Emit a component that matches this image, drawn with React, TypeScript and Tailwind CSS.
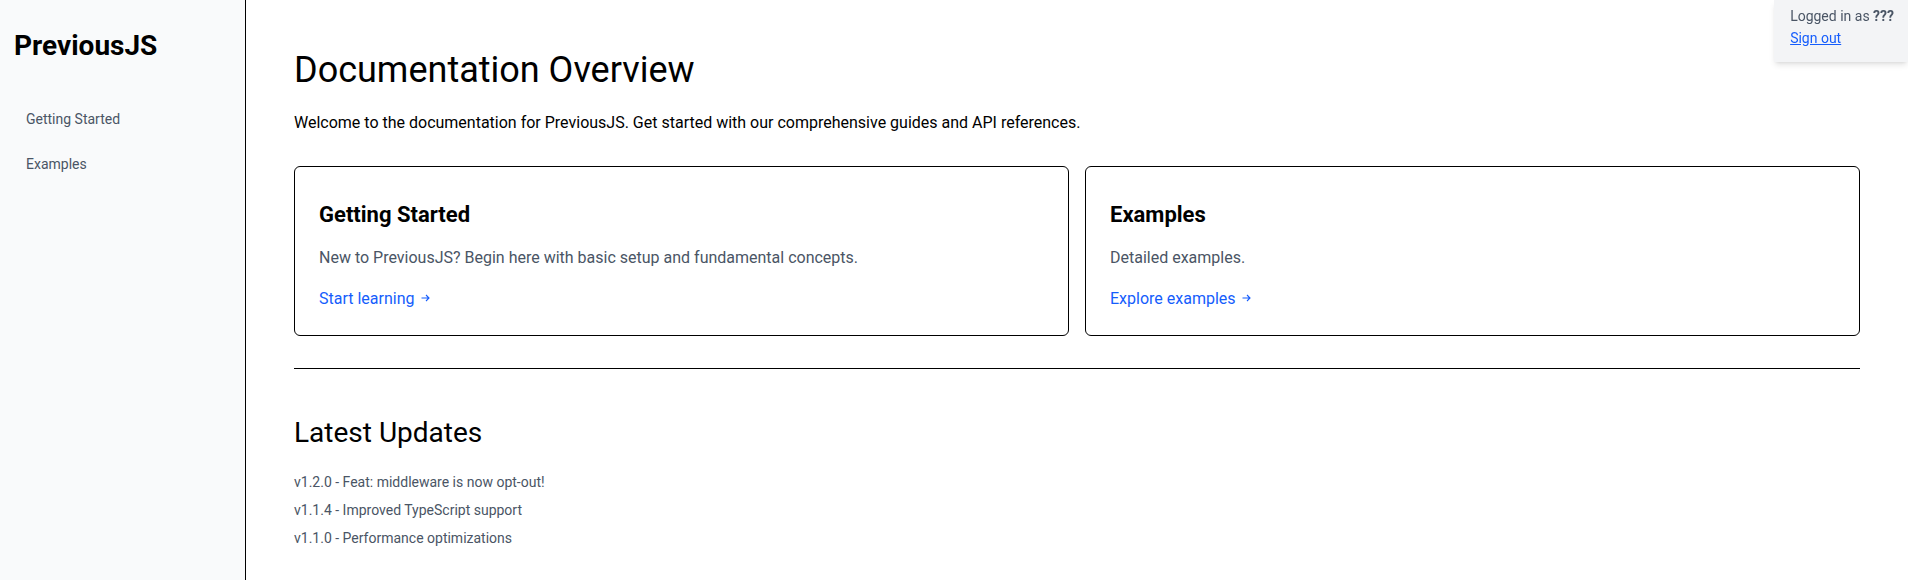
import React from "react";

const updates = [
  "v1.2.0 - Feat: middleware is now opt-out!",
  "v1.1.4 - Improved TypeScript support",
  "v1.1.0 - Performance optimizations",
];

const cards = [
  {
    title: "Getting Started",
    text: "New to PreviousJS? Begin here with basic setup and fundamental concepts.",
    link: "Start learning",
  },
  {
    title: "Examples",
    text: "Detailed examples.",
    link: "Explore examples",
  },
];

const Arrow = () => (
  <svg width="9" height="8" viewBox="0 0 9 8" fill="none" stroke="currentColor" strokeWidth="1.1" className="inline-block ml-1.5 mb-[3px]">
    <path d="M0.5 4h7.5M5 1l3 3-3 3" />
  </svg>
);

const App = () => {
  return (
    <div className="w-full min-h-screen flex bg-white text-black font-['Roboto',sans-serif]">
      <aside className="w-[246px] shrink-0 min-h-screen bg-gray-50 border-r border-black px-3.5 pt-7">
        <h1 className="text-[28px] leading-[36px] font-bold mb-[33px]">PreviousJS</h1>
        <nav className="flex flex-col">
          <a href="#" className="px-3 py-3 text-sm leading-[21px] text-gray-600">
            Getting Started
          </a>
          <a href="#" className="px-3 py-3 text-sm leading-[21px] text-gray-600">
            Examples
          </a>
        </nav>
      </aside>

      <main className="flex-1 px-12 pt-[50px]">
        <h1 className="text-4xl mb-[21px]">Documentation Overview</h1>
        <p className="text-base mb-[31px]">
          Welcome to the documentation for PreviousJS. Get started with our comprehensive guides and API references.
        </p>

        <div className="grid grid-cols-2 gap-4">
          {cards.map((c) => (
            <div key={c.title} className="border border-black rounded-md p-6">
              <h2 className="text-[22px] leading-7 font-bold mt-2.5 mb-[17px]">{c.title}</h2>
              <p className="text-base text-gray-600 mb-[17px]">{c.text}</p>
              <a href="#" className="text-base text-blue-600">
                {c.link}
                <Arrow />
              </a>
            </div>
          ))}
        </div>

        <hr className="border-black mt-8 mb-[46px]" />

        <h2 className="text-[28px] leading-[36px] mb-[21px]">Latest Updates</h2>
        <ul className="flex flex-col gap-2">
          {updates.map((u) => (
            <li key={u} className="text-sm text-gray-600">
              {u}
            </li>
          ))}
        </ul>
      </main>

      <div className="fixed top-0 right-0 bg-gray-100 shadow-md pl-4 pr-3.5 pt-1.5 pb-3.5 text-sm">
        <p className="text-gray-600">
          Logged in as <b>???</b>
        </p>
        <a href="#" className="text-blue-600 underline mt-0.5 block">
          Sign out
        </a>
      </div>
    </div>
  );
};

export default App;
